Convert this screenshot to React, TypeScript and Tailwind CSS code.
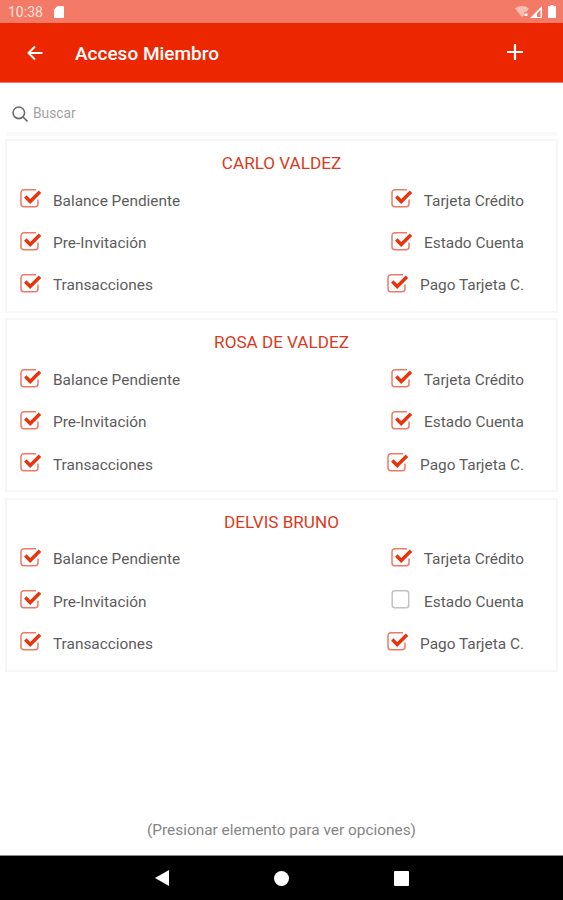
interface Permission {
  label: string;
  checked: boolean;
}

interface Member {
  name: string;
  rows: [Permission, Permission][];
}

function buildRows(estadoCuenta = true): [Permission, Permission][] {
  return [
    [
      { label: "Balance Pendiente", checked: true },
      { label: "Tarjeta Crédito", checked: true },
    ],
    [
      { label: "Pre-Invitación", checked: true },
      { label: "Estado Cuenta", checked: estadoCuenta },
    ],
    [
      { label: "Transacciones", checked: true },
      { label: "Pago Tarjeta C.", checked: true },
    ],
  ];
}

const members: Member[] = [
  { name: "CARLO VALDEZ", rows: buildRows() },
  { name: "ROSA DE VALDEZ", rows: buildRows() },
  { name: "DELVIS BRUNO", rows: buildRows(false) },
];

function CheckIcon({ checked }: { checked: boolean }) {
  if (!checked) {
    return (
      <svg className="h-[22px] w-[22px]" viewBox="0 0 22 22" fill="none">
        <rect x="1.2" y="1.7" width="16.5" height="17" rx="2.5" stroke="#c2c2c2" strokeWidth="1.5" />
      </svg>
    );
  }
  return (
    <svg className="h-[22px] w-[22px]" viewBox="0 0 22 22" fill="none">
      <path
        d="M16 1.7H4a3 3 0 0 0-3 3v11a3 3 0 0 0 3 3h11a3 3 0 0 0 3-3V11.5"
        stroke="#ee7a66"
        strokeWidth="1.5"
      />
      <path d="M5.300 8.500l4.900 5L20 3.700" stroke="#e8330d" strokeWidth="3.400" />
    </svg>
  );
}

function PermissionItem({ label, checked }: Permission) {
  return (
    <div className="flex items-center gap-[11px]">
      <div className="pb-1">
        <CheckIcon checked={checked} />
      </div>
      <span className="text-[15.4px] text-[#5c5c5c]">{label}</span>
    </div>
  );
}

function MemberCard({ member }: { member: Member }) {
  return (
    <section className="h-[174px] border-2 border-[#f7f7f7] px-[13px] pt-[10px]">
      <h2 className="h-[29.3px] text-center text-[17.1px] leading-6 text-[#d93a22]">{member.name}</h2>
      {member.rows.map(([left, right]) => (
        <div key={left.label} className="flex h-[42.2px] items-center justify-between pr-[19px]">
          <PermissionItem {...left} />
          <PermissionItem {...right} />
        </div>
      ))}
    </section>
  );
}

function StatusBar() {
  return (
    <div className="flex h-[23px] items-center bg-[#f27a66] pr-[7px] pl-2 text-white">
      <span className="pt-px text-[14px] text-[#fde3de]">10:38</span>
      <svg className="ml-[11px] h-3 w-[10px]" viewBox="0 0 10 12" fill="currentColor">
        <path d="M3.500 0H9a1 1 0 0 1 1 1v10a1 1 0 0 1-1 1H1a1 1 0 0 1-1-1V3.500z" />
      </svg>
      <svg className="ml-auto h-[11px] w-[14px]" viewBox="0 0 14 11" fill="currentColor">
        <path d="M0 2.500C4-.8 10-.8 14 2.500L11.500 6H9v3L7 11z" opacity="0.5" />
        <path d="M9.500 7.500h3V10h-3z" />
      </svg>
      <svg className="ml-[1px] h-3 w-3" viewBox="0 0 12 12" fill="currentColor">
        <path d="M12 0v12H0zM10.500 4L7 7.500V11h3.500z" fillRule="evenodd" />
      </svg>
      <svg className="ml-[6px] h-[13px] w-2" viewBox="0 0 8 13" fill="currentColor">
        <path d="M2.500 0h3v1.300H8V13H0V1.300h2.500z" />
      </svg>
    </div>
  );
}

function AppBar() {
  return (
    <header className="flex h-[60px] items-center border-b border-[#f27a66] bg-[#ec2700] pr-10 pl-[27px] text-white">
      <svg className="h-4 w-4" viewBox="0 0 16 16" fill="none" stroke="currentColor" strokeWidth="2">
        <path d="M15.500 8H2M8 1.500L1.500 8L8 14.500" />
      </svg>
      <h1 className="ml-8 pt-[3px] text-[19px] font-medium">Acceso Miembro</h1>
      <svg className="mb-[2px] ml-auto h-4 w-4" viewBox="0 0 16 16" stroke="currentColor" strokeWidth="2.200">
        <path d="M8 0v16M0 8h16" />
      </svg>
    </header>
  );
}

function SearchBar() {
  return (
    <div className="mx-[6px] flex h-[53px] items-center border-b-4 border-[#f9f9f9] pt-[13px] pl-[6px]">
      <svg className="h-4 w-4" viewBox="0 0 16 16" fill="none" stroke="#6b6b6b" strokeWidth="1.600">
        <circle cx="6.800" cy="6.800" r="5.800" />
        <path d="M11 11l4.500 4.500" />
      </svg>
      <span className="mb-[2px] ml-[5px] text-[13.8px] text-[#a3a3a3]">Buscar</span>
    </div>
  );
}

function NavigationBar() {
  return (
    <nav className="flex h-[45px] items-center justify-center gap-[105px] border-t border-[#8a8a8a] bg-black text-white">
      <svg className="h-4 w-[15px]" viewBox="0 0 15 16" fill="currentColor">
        <path d="M15 0v16L1 8z" />
      </svg>
      <div className="h-[15px] w-[15px] rounded-full bg-white" />
      <div className="h-[15px] w-[15px] rounded-[1px] bg-white" />
    </nav>
  );
}

export default function App() {
  return (
    <div className="flex h-[900px] w-full flex-col overflow-hidden bg-white font-['Roboto',sans-serif]">
      <StatusBar />
      <AppBar />
      <SearchBar />
      <main className="flex flex-col gap-[5.3px] px-[5px] pt-[3px]">
        {members.map((member) => (
          <MemberCard key={member.name} member={member} />
        ))}
      </main>
      <p className="mt-auto mb-[13px] text-center text-[15.4px] leading-6 text-[#858585]">
        (Presionar elemento para ver opciones)
      </p>
      <NavigationBar />
    </div>
  );
}
